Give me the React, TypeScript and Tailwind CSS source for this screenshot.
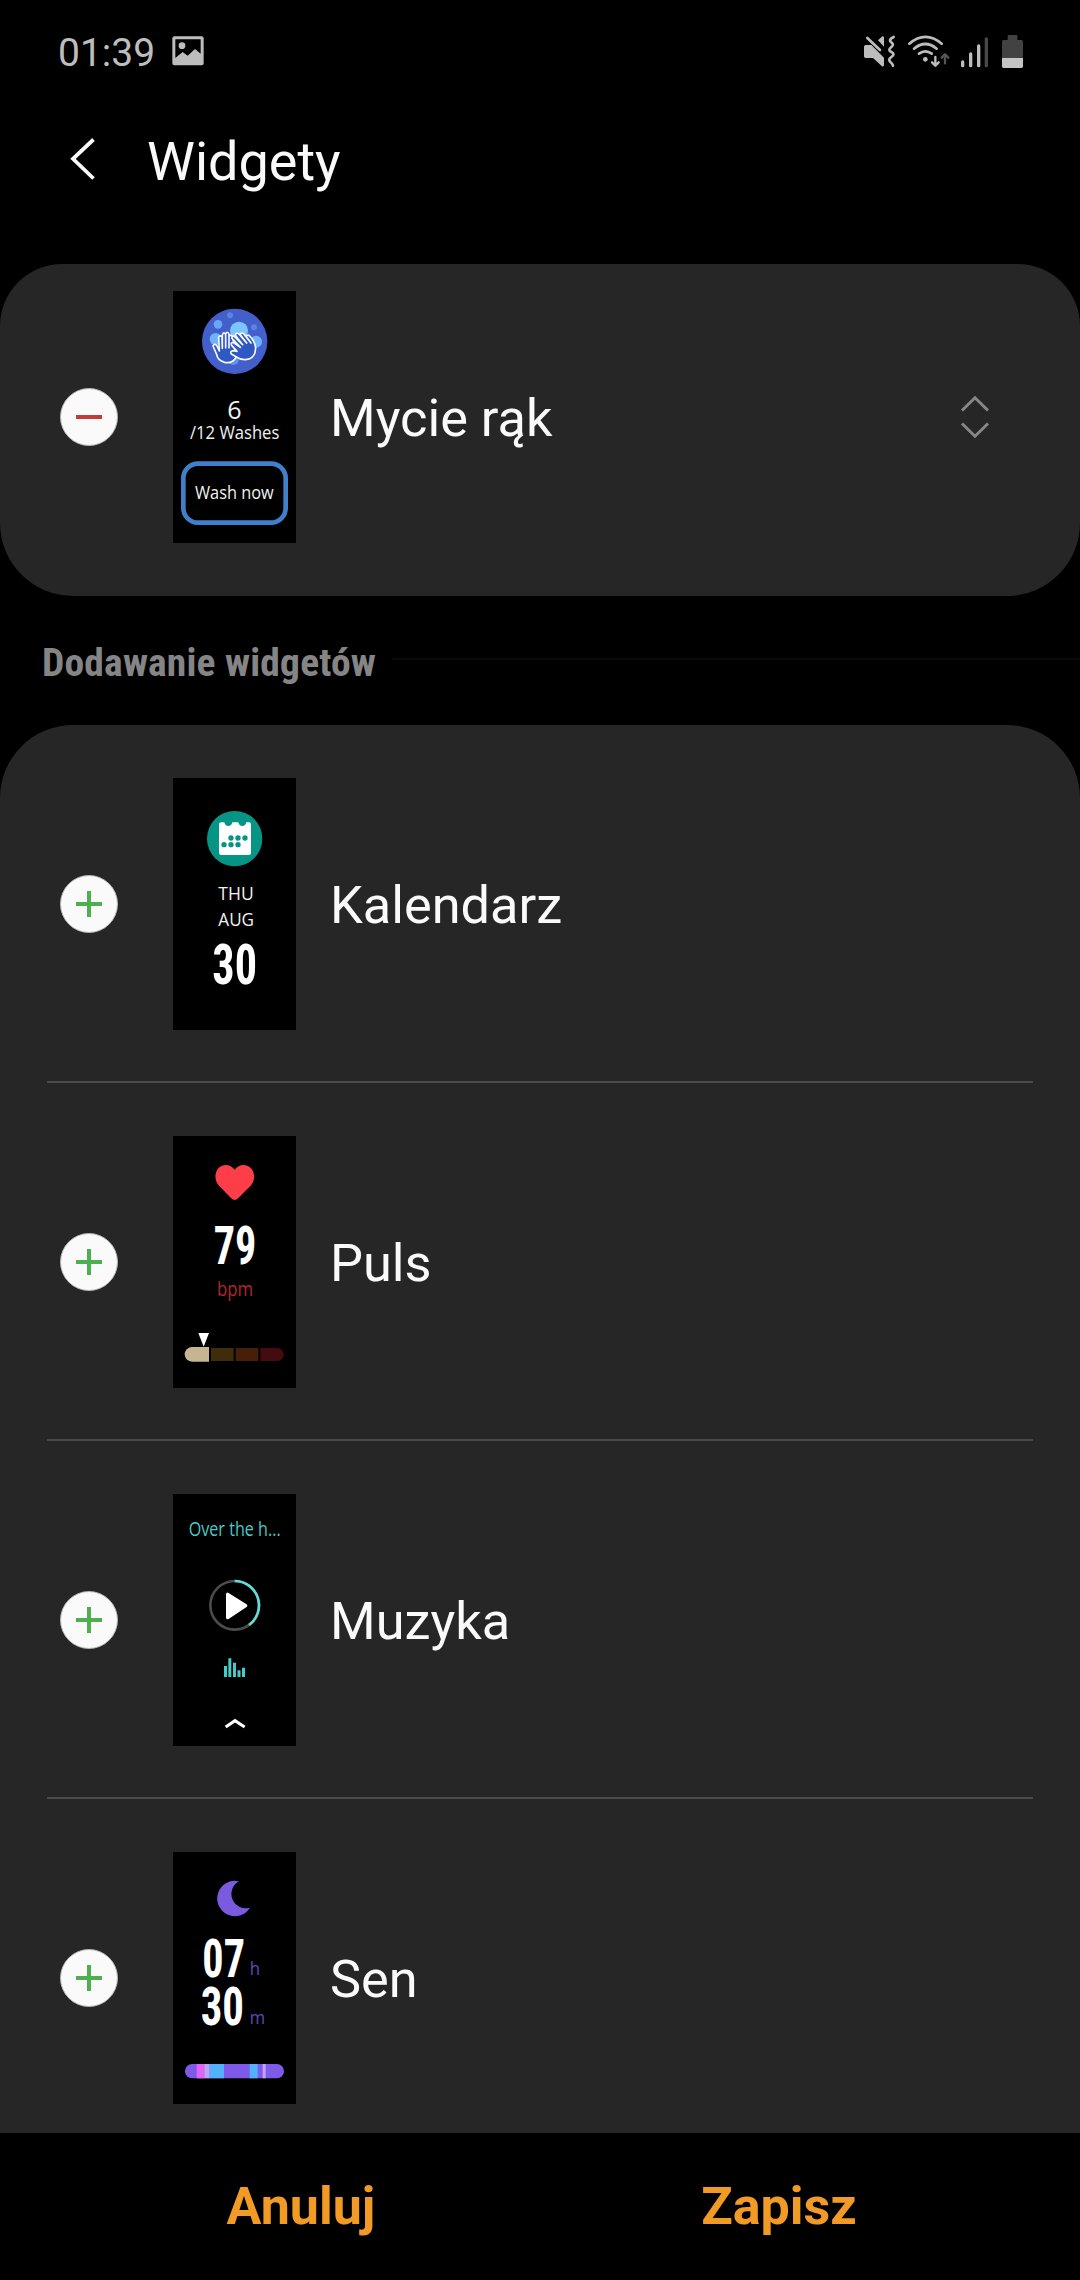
import type { ReactNode } from "react";

function StatusBar() {
  return (
    <header className="flex h-[102px] items-center justify-between pr-14 pl-[58px] text-[#bdbdbd]">
      <div className="flex items-center gap-[17px]">
        <span className="pt-[4px] text-[39px] leading-none">01:39</span>
        <svg className="h-[30px] w-8" viewBox="513 110 96 90">
          <path
            fillRule="evenodd"
            fill="#bdbdbd"
            d="M520 111H602Q608 111 608 117V192Q608 198 602 198H520Q514 198 514 192V117Q514 111 520 111ZM523 120V176L545 158L560 169L582 149L599 163V120Z"
          />
          <circle cx="543" cy="139" r="10" fill="#bdbdbd" />
        </svg>
      </div>
      <div className="flex items-center">
        <svg className="mr-[11px] h-[33px] w-8" viewBox="132 102 96 99">
          <path fill="#bdbdbd" d="M137 132H154L192 170V193Q190 199 185 195L159 171H137Q132 171 132 166V137Q132 132 137 132ZM174 118L187 106Q192 104 192 110V137Z" />
          <path d="M142 111L180 147" stroke="#bdbdbd" strokeWidth="8" strokeLinecap="round" />
          <path
            d="M221 108C211 113 207 118 213 123S222 132 214 138S206 149 214 153S223 162 214 168S207 179 212 184S218 189 219 194"
            fill="none"
            stroke="#bdbdbd"
            strokeWidth="8"
            strokeLinecap="round"
          />
        </svg>
        <svg className="mr-2.5 h-[33px] w-[43px]" viewBox="261 102 129 99">
          <g fill="none" stroke="#bdbdbd" strokeWidth="8" strokeLinecap="round">
            <path d="M268 128Q316 87 365 128" />
            <path d="M282 143Q316 115 350 143" />
            <path d="M297 158Q316 144 335 158" />
          </g>
          <circle cx="316" cy="175" r="7" fill="#bdbdbd" />
          <path d="M346 168V193M336 184L346 194L356 184" fill="none" stroke="#bdbdbd" strokeWidth="7" strokeLinecap="round" strokeLinejoin="round" />
          <path d="M375 161V187M365 170L375 160L385 170" fill="none" stroke="#545454" strokeWidth="7" strokeLinecap="round" strokeLinejoin="round" />
        </svg>
        <svg className="mr-3 h-[33px] w-[29px]" viewBox="420 102 87 99">
          <g strokeWidth="10" strokeLinecap="round" stroke="#bdbdbd">
            <path d="M428 183V194" />
            <path d="M452 159V194" />
            <path d="M476 135V194" />
            <path d="M499 114V194" stroke="#484848" />
          </g>
        </svg>
        <svg className="h-[33px] w-[23px]" viewBox="543 102 69 99">
          <path fill="#424242" d="M566 102H589Q592 102 592 105V117H604Q609 117 609 122V171H546V122Q546 117 551 117H563V105Q563 102 566 102Z" />
          <path fill="#c4c4c4" d="M546 171H609V196Q609 201 604 201H551Q546 201 546 196Z" />
        </svg>
      </div>
    </header>
  );
}

/** 123×252 watch-face preview; children are drawn in a 3× coordinate space. */
function Preview({ children }: { children: ReactNode }) {
  return (
    <svg className="h-[252px] w-[123px] shrink-0 bg-black" viewBox="0 0 369 756">
      {children}
    </svg>
  );
}

type FaceTextProps = {
  x: number;
  y: number;
  w: number;
  size: number;
  fill?: string;
  digits?: boolean;
  children: string;
};

function FaceText({ x, y, w, size, fill = "#f2f2f2", digits = false, children }: FaceTextProps) {
  return (
    <text
      x={x}
      y={y}
      textLength={w}
      lengthAdjust="spacingAndGlyphs"
      fontSize={size}
      fill={fill}
      className={digits ? "font-['Roboto_Condensed',Roboto,sans-serif] font-bold" : "font-['Open_Sans','Noto_Sans',sans-serif]"}
    >
      {children}
    </text>
  );
}

function HandWashPreview() {
  return (
    <Preview>
      <circle cx="185" cy="151" r="98" fill="#435fcb" />
      <circle cx="135" cy="100" r="13" fill="#6ba7f6" />
      <circle cx="171" cy="73" r="9" fill="#5b83e2" />
      <circle cx="198" cy="119" r="27" fill="#7cc5fd" />
      <circle cx="243" cy="109" r="9" fill="#5b83e2" />
      <circle cx="128" cy="144" r="18" fill="#6fb4fa" />
      <circle cx="249" cy="152" r="18" fill="#6fb4fa" />
      <circle cx="181" cy="205" r="17" fill="#6093ed" />
      <g fill="#2f58c2" stroke="#f4f8ff" strokeWidth="5" strokeLinejoin="round" strokeLinecap="round">
        <path d="M139 180L137 140Q139 130 147 138L148 172V132Q152 120 158 131V170V129Q163 118 168 130V170V136Q174 128 179 138L190 198Q178 219 155 214Q133 207 131 190L120 165Q123 156 131 163Z" />
        <path d="M202 169L177 142Q175 134 184 136L209 161L187 133Q188 124 197 128L221 156L202 131Q204 123 212 128L234 156L219 136Q224 129 231 136Q246 151 248 171Q247 204 218 206Q202 207 189 197L174 188Q171 180 181 179L192 181L176 163Q172 154 181 155Z" />
      </g>
      <FaceText x={163} y={385} w={43} size={78}>6</FaceText>
      <FaceText x={51} y={445} w={268} size={57}>/12 Washes</FaceText>
      <rect x="31" y="518" width="307" height="177" rx="44" fill="none" stroke="#4080cb" strokeWidth="14" />
      <FaceText x={66} y={624} w={236} size={57}>Wash now</FaceText>
    </Preview>
  );
}

function CalendarPreview() {
  return (
    <Preview>
      <circle cx="185" cy="182" r="83" fill="#069485" />
      <path
        fill="#fff"
        d="M144 133H154Q156 144 166 144T178 133H196Q198 144 208 144T220 133H228Q234 133 234 139V224Q234 231 227 231H145Q138 231 138 224V139Q138 133 144 133Z"
      />
      <g fill="#069485">
        <circle cx="174" cy="180" r="8" />
        <circle cx="195" cy="180" r="8" />
        <circle cx="216" cy="180" r="8" />
        <circle cx="153" cy="200" r="8" />
        <circle cx="174" cy="200" r="8" />
        <circle cx="195" cy="200" r="8" />
      </g>
      <FaceText x={136} y={367} w={106} size={57}>THU</FaceText>
      <FaceText x={136} y={444} w={107} size={57}>AUG</FaceText>
      <FaceText x={118} y={618} w={134} size={168} fill="#fff" digits>30</FaceText>
    </Preview>
  );
}

function PulsePreview() {
  return (
    <Preview>
      <path
        fill="#fd3d48"
        d="M185 192Q180 192 174 186L138 149C125 134 124 112 135 98C148 82 173 83 185 101C197 83 222 82 235 98C247 112 246 134 233 149L196 186Q190 192 185 192Z"
      />
      <FaceText x={122} y={384} w={128} size={160} fill="#fff" digits>79</FaceText>
      <FaceText x={132} y={479} w={108} size={58} fill="#b3262c">bpm</FaceText>
      <path fill="#fff" d="M76 591H108L92 632Z" />
      <path fill="#c6b590" d="M57 633H108V677H57A22 22 0 0 1 57 633Z" />
      <path fill="#3e2d0a" d="M114 636H182V675H114Z" />
      <path fill="#471e07" d="M188 636H256V675H188Z" />
      <path fill="#440c10" d="M262 636H313A19.500 19.500 0 0 1 313 675H262Z" />
    </Preview>
  );
}

function MusicPreview() {
  return (
    <Preview>
      <FaceText x={47} y={126} w={276} size={58} fill="#46cbc6">Over the h...</FaceText>
      <circle cx="185" cy="334" r="73" fill="none" stroke="#4b4b4b" strokeWidth="8" />
      <path d="M185 261A73 73 0 0 1 228 393" fill="none" stroke="#62dcd8" strokeWidth="8" />
      <path d="M164 301V371L218 335Z" fill="#fff" stroke="#fff" strokeWidth="10" strokeLinejoin="round" />
      <path d="M157.500 516V549M170.500 493V549M184.500 506V549M198 529V549M211.500 521V549" stroke="#46cbc6" strokeWidth="9" />
      <path d="M158 699L186 680L215 699" fill="none" stroke="#fff" strokeWidth="9" />
    </Preview>
  );
}

function SleepPreview() {
  return (
    <Preview>
      <path fill="#7a5bdf" d="M198 88A53 53 0 1 0 231 167A43 43 0 0 1 198 88Z" />
      <FaceText x={88} y={374} w={128} size={160} fill="#fff" digits>07</FaceText>
      <FaceText x={230} y={368} w={31} size={56} fill="#6249bd">h</FaceText>
      <FaceText x={83} y={520} w={130} size={160} fill="#fff" digits>30</FaceText>
      <FaceText x={230} y={515} w={46} size={56} fill="#6249bd">m</FaceText>
      <rect x="36" y="636" width="297" height="43" rx="21.500" fill="#7e5ae8" />
      <path fill="#df66f5" d="M71 636H94V679H71Z" />
      <path fill="#bfa4f4" d="M94 636H110V679H94ZM269 636H278V679H269Z" />
      <path fill="#52b1fa" d="M110 636H153V679H110ZM230 636H254V679H230Z" />
    </Preview>
  );
}

function ToggleBadge({ kind }: { kind: "add" | "remove" }) {
  return (
    <svg className="size-[58px] shrink-0" viewBox="0 0 58 58">
      <circle cx="29" cy="29" r="28.500" fill="#fafafa" stroke="#b5b5b5" strokeWidth="1" />
      {kind === "add" ? (
        <path d="M16 29H42M29 16V42" stroke="#4caf50" strokeWidth="4" />
      ) : (
        <path d="M16 29H42" stroke="#c23b3b" strokeWidth="4" />
      )}
    </svg>
  );
}

function WidgetRow({
  label,
  kind,
  preview,
  trailing,
}: {
  label: string;
  kind: "add" | "remove";
  preview: ReactNode;
  trailing?: ReactNode;
}) {
  return (
    <div className="flex items-center pr-[90px] pl-[60px]">
      <ToggleBadge kind={kind} />
      <div className="ml-[55px]">{preview}</div>
      <span className="ml-[34px] flex-1 pt-[3px] text-[52.3px] leading-none text-[#fafafa]">{label}</span>
      {trailing}
    </div>
  );
}

const available = [
  { label: "Kalendarz", preview: <CalendarPreview /> },
  { label: "Puls", preview: <PulsePreview /> },
  { label: "Muzyka", preview: <MusicPreview /> },
  { label: "Sen", preview: <SleepPreview /> },
];

export default function App() {
  return (
    <div className="flex h-[2280px] w-[1080px] flex-col overflow-hidden bg-black font-[Roboto,sans-serif]">
      <StatusBar />

      <div className="flex h-[162px] items-start pt-[33px] pl-[69px]">
        <svg className="mt-[3px] h-[42px] w-7" viewBox="0 0 28 42" fill="none">
          <path d="M24.500 1.500L4 20.800L24.500 40.500" stroke="#fafafa" strokeWidth="3.800" />
        </svg>
        <h1 className="ml-[50px] text-[54px] leading-none text-[#fafafa]">Widgety</h1>
      </div>

      <section className="h-[332px] shrink-0 rounded-t-[62px] rounded-b-[73px] bg-[#262626] pt-[27px]">
        <WidgetRow
          label="Mycie rąk"
          kind="remove"
          preview={<HandWashPreview />}
          trailing={
            <svg className="h-[44px] w-[30px]" viewBox="0 0 30 44" fill="none">
              <path d="M2 15.500L15 2.800L28 15.500M2 28.500L15 41.200L28 28.500" stroke="#868686" strokeWidth="3" />
            </svg>
          }
        />
      </section>

      <div className="flex h-[129px] shrink-0 items-center pl-[42px]">
        <h2 className="w-[350px] pt-[4px] font-['Roboto_Condensed',Roboto,sans-serif] text-[39.5px] leading-none font-bold tracking-[0.18px] whitespace-nowrap text-[#858585]">
          Dodawanie widgetów
        </h2>
        <div className="mb-[3px] h-0.5 flex-1 bg-[#0a0a0a]" />
      </div>

      <section className="min-h-0 flex-1 overflow-hidden rounded-t-[73px] bg-[#262626]">
        {available.map((w, i) => (
          <div key={w.label} className="flex h-[358px] flex-col pt-[53px]">
            <WidgetRow label={w.label} kind="add" preview={w.preview} />
            {i < available.length - 1 && <div className="mx-[47px] mt-[51px] h-0.5 bg-[#4a4a4a]" />}
          </div>
        ))}
      </section>

      <footer className="flex h-[147px] shrink-0 items-center px-[62px] text-[52px] leading-none font-bold text-[#f29a26]">
        <button className="flex-1">Anuluj</button>
        <button className="flex-1">Zapisz</button>
      </footer>
    </div>
  );
}
